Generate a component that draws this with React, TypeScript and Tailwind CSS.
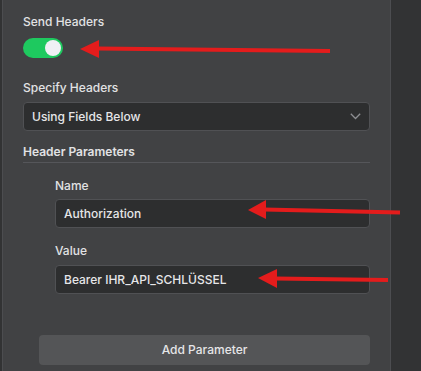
import React from "react";

export default function App() {
  return (
    <div className="relative flex h-[371px] w-[421px] overflow-hidden bg-[#323334]" style={{ fontFamily: "Inter, 'Noto Sans', sans-serif" }}>
      <div className="ml-[2px] flex w-[389px] flex-col border-l border-r border-[#4c4d50] bg-[#414244] pl-[20px] pr-[20px]">
        <div className="mt-[14px] text-[12px] font-medium leading-[16px] text-[#e2e2e4]">Send Headers</div>
        <div className="mt-[8px] flex h-[20px] w-[40px] items-center justify-end rounded-full bg-[#1ec95f] pr-[2px]">
          <div className="h-[16px] w-[16px] rounded-full bg-[#f0f0f5]" />
        </div>
        <div className="mt-[22px] text-[12px] font-medium leading-[16px] text-[#e2e2e4]">Specify Headers</div>
        <div className="mt-[6px] flex h-[29px] items-center justify-between rounded-[4px] border border-[#505154] bg-[#2d2e2f] pl-[8px] pr-[8px]">
          <span className="text-[12px] font-medium leading-[16px] text-[#e6e6e8]">Using Fields Below</span>
          <svg width="11" height="7" viewBox="0 0 11 7" fill="none">
            <path d="M0.8 0.8 L5.5 5.5 L10.2 0.8" stroke="#8d8e92" strokeWidth="1.3" />
          </svg>
        </div>
        <div className="mt-[13px] border-b border-[#55565a] pb-[2px] text-[12px] font-semibold leading-[16px] text-[#e2e2e4]">Header Parameters</div>
        <div className="pl-[32px]">
          <div className="mt-[15px] text-[12px] font-medium leading-[16px] text-[#e2e2e4]">Name</div>
          <div className="mt-[5px] flex h-[29px] items-center rounded-[4px] border border-[#505154] bg-[#2d2e2f] pl-[8px]">
            <span className="text-[12px] font-medium leading-[16px] text-[#e6e6e8]">Authorization</span>
          </div>
          <div className="mt-[15px] text-[12px] font-medium leading-[16px] text-[#e2e2e4]">Value</div>
          <div className="mt-[6px] flex h-[29px] items-center rounded-[4px] border border-[#505154] bg-[#2d2e2f] pl-[8px]">
            <span className="text-[12px] font-medium leading-[16px] text-[#e6e6e8]">Bearer IHR_API_SCHLÜSSEL</span>
          </div>
        </div>
        <div className="ml-[16px] mt-[41px] flex h-[30px] items-center justify-center rounded-[4px] bg-[#545557] text-[12px] font-medium text-[#e6e6e8]">
          Add Parameter
        </div>
      </div>
      <svg className="pointer-events-none absolute left-0 top-0" width="421" height="371" viewBox="0 0 421 371">
        <g fill="#e41c1c" stroke="#e41c1c">
          <polygon points="80,49 99,40 99,58" strokeWidth="0" />
          <line x1="97" y1="48.5" x2="330" y2="51" strokeWidth="4" />
          <polygon points="248,210 266,200 266,219" strokeWidth="0" />
          <line x1="264" y1="209.5" x2="400" y2="212.5" strokeWidth="4" />
          <polygon points="258,278 277,269 277,288" strokeWidth="0" />
          <line x1="275" y1="278.5" x2="388" y2="280" strokeWidth="4" />
        </g>
      </svg>
    </div>
  );
}
